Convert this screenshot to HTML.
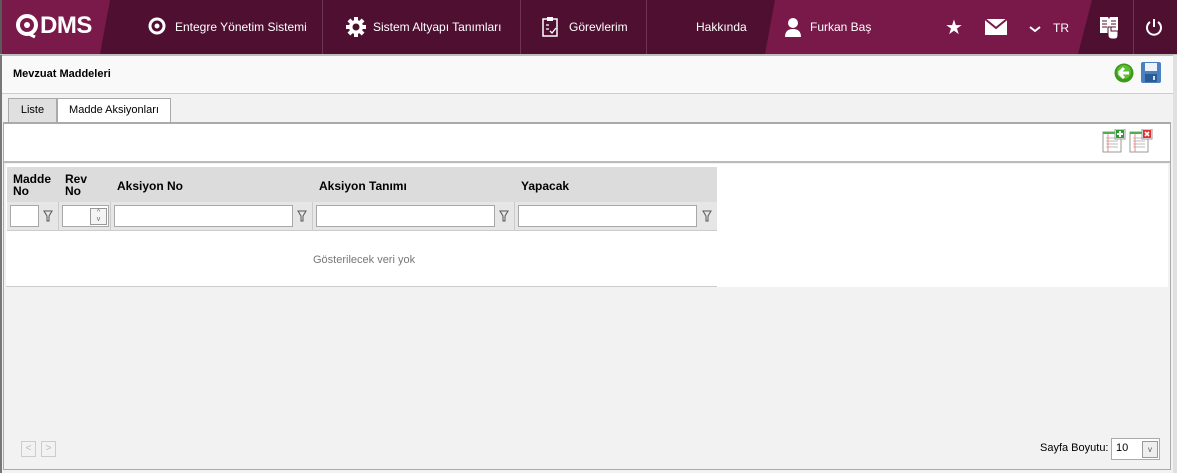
<!DOCTYPE html>
<html><head><meta charset="utf-8"><style>
*{margin:0;padding:0;box-sizing:border-box}
body{width:1177px;height:473px;overflow:hidden;background:#f2f2f2;font-family:"Liberation Sans",Tahoma,sans-serif;position:relative;font-size:12px;color:#000}
.a{position:absolute}
.nav{left:0;top:0;width:1177px;height:54px;background:#4f0f31}
.nt{color:#fff;font-size:12px;top:20px;white-space:nowrap}
.sep{top:0;width:1px;height:54px;background:#6e3552}
.hd{font-weight:bold;font-size:12px}
.inp{background:#fff;border:1px solid #a8a8a8;height:22px;top:205px}
.flt{top:210px;width:10px;height:12px}
</style></head><body>
<div class="a nav"></div>
<svg class="a" style="left:0;top:0" width="1177" height="54">
<polygon points="0,0 110,0 100,54 0,54" fill="#7a1a4a"/>
<polygon points="775,0 1092,0 1078,54 765,54" fill="#78194a"/>
</svg>
<div class="a" style="left:0;top:0;width:2px;height:54px;background:#5a5a5a"></div>
<svg class="a" style="left:15px;top:13px" width="24" height="26"><circle cx="12" cy="12" r="9" fill="none" stroke="#fff" stroke-width="4"/><circle cx="12" cy="12" r="3" fill="#fff"/><path d="M12 20 L20 24" stroke="#fff" stroke-width="3"/></svg>
<div class="a" style="left:40px;top:12px;color:#fff;font-weight:bold;font-size:24px;letter-spacing:-0.5px">DMS</div>
<svg class="a" style="left:148px;top:17px" width="18" height="18"><circle cx="9" cy="9" r="7" fill="none" stroke="#fff" stroke-width="3"/><circle cx="9" cy="9" r="2.5" fill="#fff"/></svg>
<div class="a nt" style="left:175px">Entegre Yönetim Sistemi</div>
<div class="a sep" style="left:322px"></div>
<svg class="a" style="left:345px;top:16px" width="22" height="22" viewBox="0 0 22 22"><g fill="#fff"><circle cx="11" cy="11" r="7"/><rect x="9" y="1" width="4" height="20"/><rect x="1" y="9" width="20" height="4"/><rect x="9" y="1" width="4" height="20" transform="rotate(45 11 11)"/><rect x="9" y="1" width="4" height="20" transform="rotate(-45 11 11)"/></g><circle cx="11" cy="11" r="3.5" fill="#4f0f31"/></svg>
<div class="a nt" style="left:373px">Sistem Altyapı Tanımları</div>
<div class="a sep" style="left:520px"></div>
<svg class="a" style="left:541px;top:16px" width="18" height="22"><rect x="2" y="3" width="14" height="17" fill="none" stroke="#fff" stroke-width="1.5"/><rect x="6" y="1" width="6" height="4" fill="#fff"/><path d="M5 9h3M5 13h3M9 15l2 2 4-5" stroke="#fff" stroke-width="1.3" fill="none"/></svg>
<div class="a nt" style="left:569px">Görevlerim</div>
<div class="a sep" style="left:646px"></div>
<div class="a nt" style="left:696px">Hakkında</div>
<svg class="a" style="left:784px;top:17px" width="18" height="20"><circle cx="9" cy="6" r="5" fill="#fff"/><path d="M1 20 Q1 12 9 12 Q17 12 17 20Z" fill="#fff"/></svg>
<div class="a nt" style="left:810px">Furkan Baş</div>
<div class="a" style="left:945px;top:15px;color:#fff;font-size:20px">★</div>
<svg class="a" style="left:985px;top:19px" width="22" height="16"><rect width="22" height="16" fill="#fff"/><path d="M0 0 L11 9 L22 0" stroke="#78194a" stroke-width="2" fill="none"/></svg>
<svg class="a" style="left:1029px;top:26px" width="12" height="8"><path d="M1 1 L6 5 L11 1" stroke="#fff" stroke-width="2" fill="none"/></svg>
<div class="a nt" style="left:1053px;top:21px">TR</div>
<svg class="a" style="left:1098px;top:15px" width="24" height="24"><path d="M2 2 H10 L11 4 L12 2 H20 V18 H2Z" fill="#fff"/><path d="M4 6h5M4 9h5M4 12h5M13 6h5M13 9h5M13 12h5" stroke="#4f0f31" stroke-width="1"/><path d="M10 12 v8 q0 4 4 4 h3 q3 0 3-4 v-4 h-7 v-4z" fill="#fff" stroke="#4f0f31"/></svg>
<div class="a sep" style="left:1133px"></div>
<svg class="a" style="left:1145px;top:18px" width="18" height="18"><path d="M5 4 A7 7 0 1 0 13 4" stroke="#fff" stroke-width="2" fill="none"/><path d="M9 1v8" stroke="#fff" stroke-width="2"/></svg>
<div class="a" style="left:0;top:54px;width:1177px;height:2px;background:#bdbdbd"></div>
<div class="a" style="left:0;top:56px;width:1177px;height:38px;background:#f9f9f9"></div>
<div class="a" style="left:0;top:55px;width:2px;height:418px;background:#777"></div>
<div class="a" style="left:1173px;top:55px;width:4px;height:418px;background:#e0e0e0"></div>
<div class="a hd" style="left:13px;top:68px;font-size:11px">Mevzuat Maddeleri</div>
<div class="a" style="left:2px;top:93px;width:1171px;height:1px;background:#ccc"></div>
<svg class="a" style="left:1114px;top:63px" width="20" height="20"><circle cx="10" cy="10" r="9.5" fill="#3d9a1c"/><circle cx="10" cy="9" r="7" fill="#5cbd2f"/><path d="M5 10 L10 5 M5 10 L10 15 M5 10 H15" stroke="#fff" stroke-width="3"/></svg>
<svg class="a" style="left:1141px;top:62px" width="20" height="21"><rect width="20" height="21" rx="2" fill="#4a7fc0"/><rect x="4" y="1" width="12" height="8" fill="#eef3fa"/><rect x="4" y="12" width="12" height="8" fill="#2c5a94"/><rect x="12" y="14" width="2" height="4" fill="#cfe0f2"/></svg>
<div class="a" style="left:8px;top:98px;width:49px;height:24px;background:#e0e0e0;border:1px solid #aaa;border-bottom:none;text-align:center;line-height:22px;font-size:11px">Liste</div>
<div class="a" style="left:57px;top:98px;width:114px;height:25px;background:#fff;border:1px solid #aaa;border-bottom:none;text-align:center;line-height:22px;font-size:11px">Madde Aksiyonları</div>
<div class="a" style="left:3px;top:122px;width:1168px;height:348px;border:1px solid #aaa;border-top:2px solid #aaa;background:#f2f2f2"></div>
<div class="a" style="left:4px;top:124px;width:1166px;height:37px;background:#fff"></div>
<svg class="a" style="left:1102px;top:129px" width="24" height="24"><rect x="1" y="3" width="18" height="20" fill="#fff" stroke="#999"/><rect x="1" y="3" width="18" height="2" fill="#4caf50"/><path d="M4 9h12M4 12h12M4 15h12M4 18h12" stroke="#bbb"/><path d="M6 5v18" stroke="#e88"/><rect x="13" y="0" width="10" height="10" fill="#fff" stroke="#999"/><rect x="14" y="1" width="8" height="8" fill="#2e9b2e"/><path d="M18 2v6M15 5h6" stroke="#fff" stroke-width="2"/></svg>
<svg class="a" style="left:1129px;top:129px" width="24" height="24"><rect x="1" y="3" width="18" height="20" fill="#fff" stroke="#999"/><rect x="1" y="3" width="18" height="2" fill="#4caf50"/><path d="M4 9h12M4 12h12M4 15h12M4 18h12" stroke="#bbb"/><path d="M6 5v18" stroke="#e88"/><rect x="13" y="0" width="10" height="10" fill="#fff" stroke="#999"/><rect x="14" y="1" width="8" height="8" fill="#d33"/><path d="M16 3l4 4M20 3l-4 4" stroke="#fff" stroke-width="1.6"/></svg>
<div class="a" style="left:4px;top:161px;width:1166px;height:2px;background:#bbb"></div>
<div class="a" style="left:6px;top:164px;width:1162px;height:123px;background:#fff"></div>
<div class="a" style="left:7px;top:167px;width:710px;height:35px;background:#dcdcdc"></div>
<div class="a" style="left:7px;top:202px;width:710px;height:29px;background:#e6e6e6;border-bottom:1px solid #ccc"></div>
<div class="a" style="left:58px;top:202px;width:1px;height:29px;background:#ccc"></div>
<div class="a" style="left:110px;top:202px;width:1px;height:29px;background:#ccc"></div>
<div class="a" style="left:312px;top:202px;width:1px;height:29px;background:#ccc"></div>
<div class="a" style="left:514px;top:202px;width:1px;height:29px;background:#ccc"></div>
<div class="a hd" style="left:13px;top:173px;line-height:12px">Madde<br>No</div>
<div class="a hd" style="left:65px;top:173px;line-height:12px">Rev<br>No</div>
<div class="a hd" style="left:117px;top:179px">Aksiyon No</div>
<div class="a hd" style="left:319px;top:179px">Aksiyon Tanımı</div>
<div class="a hd" style="left:521px;top:179px">Yapacak</div>
<div class="a inp" style="left:10px;width:29px"></div>
<div class="a inp" style="left:62px;width:47px"></div>
<div class="a" style="left:90px;top:208px;width:17px;height:17px;border:1px solid #999;background:#f4f4f4;font-size:7px;line-height:7px;text-align:center;color:#666">^<br>v</div>
<div class="a inp" style="left:114px;width:179px"></div>
<div class="a inp" style="left:316px;width:179px"></div>
<div class="a inp" style="left:518px;width:179px"></div>
<svg class="a flt" style="left:43px" viewBox="0 0 10 12"><path d="M1 1h8l-3 5v5h-2v-5z" fill="none" stroke="#555"/></svg>
<svg class="a flt" style="left:297px" viewBox="0 0 10 12"><path d="M1 1h8l-3 5v5h-2v-5z" fill="none" stroke="#555"/></svg>
<svg class="a flt" style="left:499px" viewBox="0 0 10 12"><path d="M1 1h8l-3 5v5h-2v-5z" fill="none" stroke="#555"/></svg>
<svg class="a flt" style="left:702px" viewBox="0 0 10 12"><path d="M1 1h8l-3 5v5h-2v-5z" fill="none" stroke="#555"/></svg>
<div class="a" style="left:313px;top:254px;color:#777;font-size:11px">Gösterilecek veri yok</div>
<div class="a" style="left:6px;top:286px;width:711px;height:1px;background:#ccc"></div>
<div class="a" style="left:21px;top:441px;width:15px;height:16px;border:1px solid #ccc;color:#bbb;font-size:10px;text-align:center;line-height:14px">&lt;</div>
<div class="a" style="left:41px;top:441px;width:15px;height:16px;border:1px solid #ccc;color:#bbb;font-size:10px;text-align:center;line-height:14px">&gt;</div>
<div class="a" style="left:1040px;top:442px;font-size:11px">Sayfa Boyutu:</div>
<div class="a" style="left:1111px;top:438px;width:49px;height:22px;border:1px solid #aaa;background:#fff;font-size:11px;padding:3px 4px">10</div>
<div class="a" style="left:1142px;top:441px;width:16px;height:17px;border:1px solid #999;background:#eee;font-size:8px;text-align:center;line-height:15px;color:#555">v</div>
</body></html>
